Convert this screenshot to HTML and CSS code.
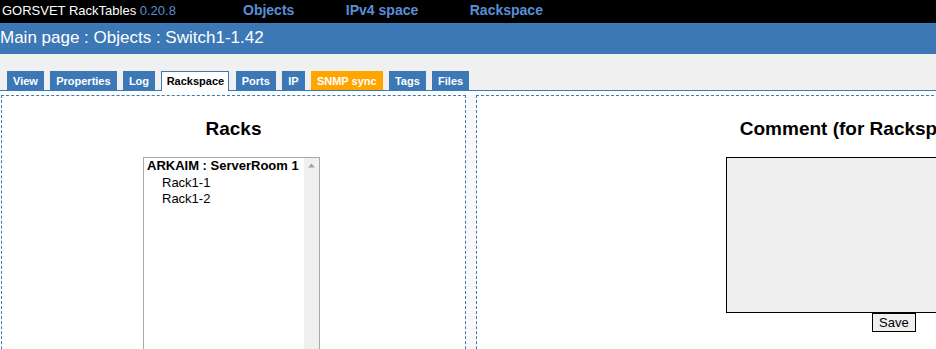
FILE: index.html
```html
<!DOCTYPE html>
<html lang="en">
<head>
<meta charset="utf-8">
<title>Switch1-1.42 - Rackspace</title>
<link rel="stylesheet" href="styles.css">
</head>
<body>
<header class="topbar">
  <div class="brand">GORSVET RackTables <span class="ver">0.20.8</span></div>
  <nav class="mainnav">
    <a href="#">Objects</a>
    <a href="#">IPv4 space</a>
    <a href="#">Rackspace</a>
  </nav>
</header>
<div class="crumbs">Main page : Objects : Switch1-1.42</div>
<div class="tabbar">
  <ul class="tabs">
    <li class="tab">View</li>
    <li class="tab">Properties</li>
    <li class="tab">Log</li>
    <li class="tab tab-active">Rackspace</li>
    <li class="tab">Ports</li>
    <li class="tab">IP</li>
    <li class="tab tab-snmp">SNMP sync</li>
    <li class="tab">Tags</li>
    <li class="tab">Files</li>
  </ul>
</div>
<main class="content">
  <section class="panel panel-left">
    <h2 class="panel-title">Racks</h2>
    <div class="rackselect">
      <div class="racklist">
        <div class="optgroup">ARKAIM : ServerRoom 1</div>
        <div class="opt">Rack1-1</div>
        <div class="opt">Rack1-2</div>
      </div>
      <div class="scrolltrack">
        <svg class="scrollarrow" width="15" height="15" viewBox="0 0 15 15"><polygon points="4,9.5 7.5,5.5 11,9.5" fill="#a3a3a3"/></svg>
      </div>
    </div>
  </section>
  <div class="gutter"></div>
  <section class="panel panel-right">
    <h2 class="panel-title">Comment (for Rackspace)</h2>
    <form class="commentform">
      <textarea class="comment"></textarea>
      <button type="button" class="savebtn">Save</button>
    </form>
  </section>
</main>
</body>
</html>
```
FILE: styles.css
```css
html, body {
  margin: 0;
  padding: 0;
  overflow: hidden;
  background: #fff;
  font-family: "Liberation Sans", Arial, sans-serif;
  color: #000;
}

.topbar {
  display: flex;
  height: 23px;
  background: #000;
  color: #fff;
  padding-left: 2px;
  line-height: 21px;
  white-space: nowrap;
}

.brand {
  flex: 0 0 241px;
  font-size: 13px;
}

.ver {
  color: #5a8fd6;
}

.mainnav {
  display: flex;
  gap: 51.5px;
  font-size: 14px;
  font-weight: bold;
}

.mainnav a {
  color: #5a8fd6;
  text-decoration: none;
}

.crumbs {
  height: 31px;
  line-height: 29px;
  background: #3c78b5;
  color: #fff;
  font-size: 17px;
  white-space: nowrap;
}

.tabbar {
  background: #f0f0f0;
  padding: 17px 0 0 7px;
  border-bottom: 1px solid #3c78b5;
}

.tabs {
  display: flex;
  gap: 6.3px;
  list-style: none;
  margin: 0;
  padding: 0;
}

.tab {
  background: #3c78b5;
  color: #fff;
  font-size: 11px;
  font-weight: bold;
  line-height: 18px;
  border: 1px solid #3c78b5;
  border-bottom: 0;
  padding: 0 5px;
  white-space: nowrap;
}

.tab-active {
  background: #fff;
  color: #000;
  margin-bottom: -1px;
  padding: 0 4.3px 1px;
}

.tab-snmp {
  background: #ffa500;
  border-color: #ffa500;
}

.content {
  display: flex;
  padding: 4px 0 0 1px;
}

.panel {
  flex: none;
  box-sizing: border-box;
  height: 400px;
  border: 1px dashed #3c78b5;
}

.panel-left {
  width: 465px;
}

.gutter {
  flex: none;
  width: 10px;
  background: #f9f9fb;
}

.panel-right {
  width: 763px;
}

.panel-title {
  margin: 22px 0 17px;
  font-size: 19px;
  line-height: 22px;
  font-weight: bold;
  text-align: center;
  white-space: nowrap;
}

.rackselect {
  display: flex;
  box-sizing: border-box;
  width: 177px;
  height: 230px;
  margin-left: 141px;
  border: 1px solid #a9a9a9;
  font-size: 13px;
  background: #fff;
}

.racklist {
  flex: 1;
  line-height: 16.7px;
  white-space: nowrap;
}

.optgroup {
  font-weight: bold;
  padding-left: 3px;
}

.opt {
  padding-left: 18px;
}

.scrolltrack {
  flex: none;
  width: 15px;
  background: #f0f0f0;
}

.scrollarrow {
  display: block;
}

.commentform {
  padding-left: 249px;
}

.comment {
  display: block;
  box-sizing: border-box;
  width: 340px;
  height: 156px;
  margin: 0;
  border: 1px solid #000;
  background: #efefef;
  resize: none;
}

.savebtn {
  display: block;
  box-sizing: border-box;
  height: 19px;
  margin: 0 0 0 146px;
  padding: 0 6px;
  border: 1px solid #000;
  background: #efefef;
  color: #000;
  font-family: "Liberation Sans", Arial, sans-serif;
  font-size: 13px;
  line-height: 15px;
}
```
